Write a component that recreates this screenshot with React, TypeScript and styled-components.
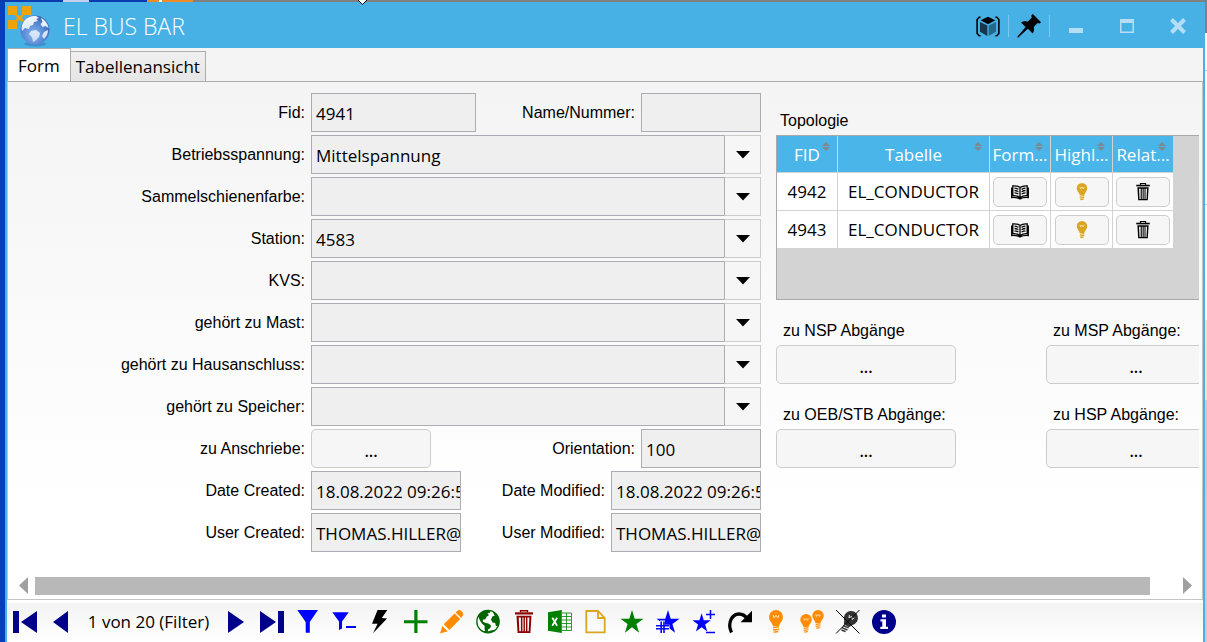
import React from 'react';
import styled, { createGlobalStyle } from 'styled-components';

const ui = '"Open Sans", "Noto Sans", sans-serif';
const arial = '"Liberation Sans", Arial, sans-serif';
const accent = '#47b1e6';

const Global = createGlobalStyle`
  *, *::before, *::after { box-sizing: border-box; }
  body { margin: 0; font-family: ${ui}; font-size: 17px; color: #000; }
  button, input, select { font: inherit; color: inherit; margin: 0; }
  svg { display: block; flex: none; }
`;

const Desktop = styled.div`
  position: relative;
  display: flex;
  min-height: 100vh;
  padding: 2px 2px 0 5px;
  background:
    linear-gradient(90deg, #0a3bb0 0 63px, #c4cfee 63px 89px, #0a3bb0 89px 147px, #f08a24 147px 159px, #fff 159px 162px, #f08a24 162px 193px, #808080 193px) 0 0 / 100% 2px no-repeat,
    linear-gradient(#808080 0 33px, #fff 33px 70px, #a9cfe8 70px 71px, #fff 71px 204px, #a9cfe8 204px 205px, #fff 205px 320px, #f6e3b0 320px 400px, #cfc8cc 400px) 100% 0 / 2px 100% no-repeat,
    #0540b8;
`;

const Cursor = styled.svg`
  position: absolute;
  left: 357px;
  top: 0;
`;

const Window = styled.div`
  flex: 1;
  min-width: 0;
  display: flex;
  flex-direction: column;
  border: solid ${accent};
  border-width: 0 2px;
  background: #fff;
`;

const TitleBar = styled.header`
  display: flex;
  align-items: center;
  height: 46px;
  padding-top: 2px;
  background: ${accent};
`;

const Title = styled.h1`
  flex: 1;
  margin: 0 0 0 12px;
  font-size: 23px;
  line-height: 32px;
  font-weight: 300;
  color: #fff;
`;

const Separator = styled.span`
  width: 1px;
  height: 22px;
  background: #7ec8ef;
`;

const IconButton = styled.button<{ $width: number }>`
  display: flex;
  align-items: center;
  justify-content: center;
  flex: none;
  width: ${p => p.$width}px;
  height: 36px;
  padding: 0;
  border: 0;
  background: none;
`;

const Tabs = styled.nav`
  display: flex;
  align-items: flex-end;
  height: 33px;
  background: #f4f4f4;
`;

const Tab = styled.button<{ $active?: boolean }>`
  height: ${p => (p.$active ? 33 : 30)}px;
  padding: ${p => (p.$active ? '2px 10px 0' : '0 5px')};
  border: 1px solid #acacac;
  border-bottom: 0;
  border-left-width: ${p => (p.$active ? 1 : 0)}px;
  background: ${p => (p.$active ? '#fff' : 'linear-gradient(#efefef, #e6e6e6)')};
  line-height: 24px;
`;

const Pane = styled.main`
  flex: 1;
  display: flex;
  flex-direction: column;
  border: 1px solid #c4c4c4;
  border-top-color: #acacac;
  background: linear-gradient(#f4f4f4, #fff 420px);
`;

const Form = styled.form`
  flex: 1;
  display: flex;
  gap: 15px;
  padding: 11px 3px 20px 0;
`;

const Fields = styled.div`
  flex: none;
  display: flex;
  flex-direction: column;
  gap: 3px;
`;

const Row = styled.div`
  display: grid;
  grid-template-columns: 297px 450px;
  column-gap: 6px;
  align-items: center;
`;

const Cell = styled.div`
  display: flex;
  align-items: center;
  gap: 6px;
`;

const Label = styled.label`
  flex: 1;
  font: 16px/20px ${arial};
  text-align: right;
  white-space: nowrap;
`;

const TextBox = styled.input<{ $width: number }>`
  flex: none;
  width: ${p => p.$width}px;
  height: 39px;
  padding: 2px 0 0 4px;
  border: 1px solid #abadb3;
  border-radius: 0;
  background: #efefef;
  outline: 0;
`;

const Combo = styled.div`
  flex: 1;
  display: grid;
  grid-template-columns: 1fr 37px;
`;

const Select = styled.select`
  grid-area: 1 / 1 / 2 / 3;
  height: 39px;
  padding: 2px 40px 0 4px;
  appearance: none;
  border: 1px solid #abadb3;
  border-radius: 0;
  background: #efefef;
`;

const Arrow = styled.span`
  grid-area: 1 / 2 / 2 / 3;
  z-index: 1;
  display: flex;
  align-items: center;
  justify-content: center;
  border: 1px solid #ccc;
  border-left-color: #abadb3;
  background: #f6f6f6;
  pointer-events: none;
`;

const MoreButton = styled.button<{ $width: number }>`
  flex: none;
  width: ${p => p.$width}px;
  height: 39px;
  padding: 4px 0 0;
  border: 1px solid #ccc;
  border-radius: 5px;
  background: #f6f6f6;
  font-weight: 600;
  font-size: 16px;
  line-height: 20px;
`;

const Side = styled.div`
  flex: 1;
  min-width: 0;
  overflow: hidden;
  padding-top: 12px;
`;

const SideLabel = styled.label`
  display: block;
  padding: 2px 0 0 7px;
  font: 16px/28px ${arial};
`;

const Caption = styled.h2`
  margin: 0;
  padding: 2px 0 0 4px;
  font: 16px/28px ${arial};
`;

const TableFrame = styled.div`
  height: 165px;
  border: 1px solid #a9a9a9;
  border-right: 0;
  background: #d3d3d3;
`;

const Table = styled.table`
  width: 397px;
  table-layout: fixed;
  border-collapse: separate;
  border-spacing: 0;
`;

const Th = styled.th<{ $width: number }>`
  position: relative;
  width: ${p => p.$width}px;
  height: 37px;
  padding: 2px 0 0;
  border: solid #d3d3d3;
  border-width: 0 1px 1px 0;
  background: #4ab5e8;
  color: #fff;
  font-weight: 400;
  line-height: 24px;
  white-space: nowrap;
`;

const Sort = styled.svg`
  position: absolute;
  top: 6px;
  right: 7px;
`;

const Td = styled.td`
  height: 38px;
  padding: 1px 0 0;
  border: solid #d3d3d3;
  border-width: 0 1px 1px 0;
  background: #fff;
  text-align: center;
  line-height: 24px;
`;

const CellButton = styled.button`
  display: flex;
  align-items: center;
  justify-content: center;
  width: 54px;
  height: 30px;
  margin: 0 auto;
  padding: 0;
  border: 1px solid #ccc;
  border-radius: 5px;
  background: #f6f6f6;
`;

const Links = styled.div`
  display: grid;
  grid-template-columns: 180px 180px;
  gap: 15px 90px;
  padding-top: 15px;
`;

const ScrollBar = styled.div`
  display: flex;
  align-items: center;
  gap: 6px;
  height: 26px;
  padding: 0 9px 0 11px;
`;

const Track = styled.div`
  flex: 1;
  height: 18px;
  padding-right: 27px;
`;

const Thumb = styled.div`
  height: 100%;
  background: #b8b8b8;
`;

const Toolbar = styled.footer`
  display: flex;
  align-items: center;
  height: 39px;
  margin-top: 3px;
  padding-bottom: 2px;
  background: linear-gradient(#f3f3f3, #fff);
`;

const Position = styled.span`
  width: 139px;
  text-align: center;
  line-height: 24px;
  white-space: nowrap;
`;

const BULB = (
  <>
    <circle cx="7" cy="7" r="7" />
    <path d="M1.500 10.500h11L10 16H4z" />
    <path d="M4 17.600l6-.8M4 20l6-.8M4.800 22.200l4.400-.7" stroke="currentColor" strokeWidth="1.500" />
    <path d="M4.200 5.200l.9 2.600L7 5.400l1.900 2.400.9-2.600" fill="none" stroke="#fff" strokeWidth=".8" />
  </>
);

const STAR = 'M12 0l2.700 8.700H23.500L16.400 14l2.700 8.700L12 17.300 4.900 22.700 7.600 14 .5 8.700h8.800z';

type IconProps = { color?: string; size?: number; children: React.ReactNode };
const Icon = ({ color = '#000', size = 24, children }: IconProps) => (
  <svg width={size} height={size} viewBox="0 0 24 24" fill="currentColor" color={color} overflow="visible" aria-hidden="true">
    {children}
  </svg>
);

const Trash = () => (
  <>
    <path d="M8.500 2.500V.7h7v1.800" fill="none" stroke="currentColor" strokeWidth="1.400" />
    <path d="M3 2.300h18v2.200H3z" />
    <path fillRule="evenodd" d="M4.500 5.800h15L18.400 23H5.600zM6.700 7.600l.7 13.600h1.500V7.600zM10.400 7.600v13.600h1.100V7.600zM12.900 7.600v13.600H14V7.600zM15.400 7.600v13.600h1.300l.7-13.600z" />
  </>
);

const LogoIcon = () => (
  <svg width="44" height="44" viewBox="0 0 44 44" aria-hidden="true">
    <defs>
      <radialGradient id="ocean" cx="45%" cy="65%" r="60%">
        <stop offset="0" stopColor="#8fb8ee" />
        <stop offset="0.6" stopColor="#5a8ad6" />
        <stop offset="1" stopColor="#3f6db8" />
      </radialGradient>
      <linearGradient id="land" x1="0" y1="0" x2="0" y2="1">
        <stop offset="0" stopColor="#f4f8ff" />
        <stop offset="1" stopColor="#c9dcf5" />
      </linearGradient>
    </defs>
    <g fill="#efa30b">
      <path d="M1 2h9v9H1zM15 2h9v9h-9zM1 16h9v9H1z" />
      <path d="M9 10l4 2 3-2 1 1-2 3 2 3-1 1-4-2-3 2-1-1 2-3-2-3z" />
    </g>
    <ellipse cx="28" cy="40" rx="11" ry="2.500" fill="#3f92c8" />
    <circle cx="28" cy="26" r="14.600" fill="url(#ocean)" />
    <path fill="url(#land)" d="M17 17c3-4 8-5.600 12-5l3 2-3 1 2 2-4 1-1 3-3 1-1 3-4-1-3 3c-1-4 0-7 2-10zM34 14c4 2 7 6 7.500 10l-3-2-3 1-2-3 2-2zM24 27l5-1 4 3-1 4-4 4-2 1-1-5-3-3zM37 28l4-2c0 4-2 7-4 9l-2-3z" />
  </svg>
);

const CubeIcon = () => (
  <svg width="24" height="21" viewBox="0 0 26 22" aria-hidden="true">
    <path d="M5 1H3.500L1.200 3.500v15L3.500 21H5M21 1h1.500l2.300 2.500v15L22.500 21H21" fill="none" stroke="#000" strokeWidth="1.700" />
    <path d="M13 .5L21 4.200 13 8.500 5 4.200z" />
    <path d="M4.300 6l8 4v11.300l-8-4.600z" fill="#14384a" />
    <path d="M21.700 6l-8 4v11.300l8-4.600z" fill="#24698a" />
  </svg>
);

const PinIcon = () => (
  <Icon>
    <path d="M15.800 0L24 8.300l-1.200 1.200-2.200-.4-3.900 4c.8 2.600.4 4.700-1 6.400l-4.900-4.700L1 23.700l-.8-.6L8.600 13 4 8.600c1.900-1.400 4.200-1.600 6.500-.8l4.200-4.100-.4-2.300z" />
  </Icon>
);

const tools: { name: string; color: string; art: React.ReactNode }[] = [
  { name: 'Filter', color: '#0000ff', art: <path d="M1.300 0H22l-8.200 12v10.700H9.700V12z" /> },
  { name: 'Filter entfernen', color: '#0000ff', art: <path d="M.3 2.300h16.400L10 11.500v7L7 20v-8.500zM14 16h10v2H14z" /> },
  { name: 'Aktion', color: '#000', art: <path d="M9.600 0h9.700l-5.500 8 5.300.4L5 23.300l4.600-9.600H4z" /> },
  { name: 'Neu', color: '#008000', art: <path d="M10.300 0h3.200v10.200H23.500v3H13.500V23h-3.200v-9.800H0v-3h10.300z" /> },
  {
    name: 'Bearbeiten', color: '#ff8c00',
    art: <path d="M2.300 16l5.400 5.300L0 23.500zM3.700 14.300L14.600 3.500l5.600 5.600L9.400 20zM15.700 2.400L17.400.8c1.400-1.300 3-.9 4.500.6s2 3.200.6 4.700L21.200 8z" />,
  },
  {
    name: 'Karte', color: '#006400',
    art: (
      <>
        <circle cx="12" cy="11.600" r="11.200" fill="#fff" stroke="currentColor" strokeWidth="1.300" />
        <path d="M2 5.500C4 2.300 7.500.4 11 .3l3.300 1.200-.7 1.800-2.200-.3 1.500 2.300-2.300 1.500-1.400 2.600-2.400.2.200 2.100 2.600 1.300 2.900.4 2.500 2.200-.6 2.300-2.300 1.700-.4 2-1.700 1.200-1.500-3.600.2-3.200-2.600-2.300-2.300-3.400zM17 1.500c3.300 1.600 5.700 4.600 6.200 8.500l-.2 3-1.500 3.500-1.700-.8-.6-2.700-2.700-.6-1.500-2.600 1.300-3.300 2.300-.7-1-2z" />
        <path d="M6 21c4 2.200 9 2 12.500-.3l-2-.8-4 1.300z" />
      </>
    ),
  },
  { name: 'Löschen', color: '#8b0000', art: <Trash /> },
  {
    name: 'Excel', color: '#008000',
    art: (
      <>
        <path d="M0 2.300L13.800 0v23L0 20.700z" />
        <path d="M4.300 7.800l4.800 8M9.100 7.800l-4.800 8" fill="none" stroke="#fff" strokeWidth="1.700" />
        <path d="M14 3h9.500v17.500H14M14 6.500h9M14 10h9M14 13.500h9M14 17h9M18.500 3v17" fill="none" stroke="currentColor" strokeWidth=".8" />
      </>
    ),
  },
  { name: 'Bericht', color: '#daa520', art: <path d="M2.300 1H14l6.700 7v14.300H2.300zM14 1v7h6.700" fill="none" stroke="currentColor" strokeWidth="1.800" /> },
  { name: 'Favorit', color: '#008000', art: <path d={STAR} /> },
  {
    name: 'Auswahl hinzufügen', color: '#0000ff',
    art: (
      <>
        <path d={STAR} />
        <path d="M6.500 10.500v13M0 17.200h13.500" stroke="#fff" strokeWidth="5" />
        <path d="M5.200 11.500V23M8 11.500V23M0 15.800h13M0 18.800h13" stroke="currentColor" strokeWidth="1.600" />
      </>
    ),
  },
  {
    name: 'Auswahl ändern', color: '#0000ff',
    art: (
      <>
        <path d={STAR} transform="translate(0 3.300) scale(.8)" />
        <path d="M18.500 0v9M14 4.500h9M14 22.500h9" stroke="currentColor" strokeWidth="1.500" />
      </>
    ),
  },
  {
    name: 'Wiederholen', color: '#000',
    art: (
      <>
        <path d="M3.500 22.500C-1 13 4 4 11 4c4 0 7 2.500 9 5.500" fill="none" stroke="currentColor" strokeWidth="3.300" />
        <path d="M24 .7v11.600H12.500z" />
      </>
    ),
  },
  { name: 'Hervorheben', color: '#ff8c00', art: <g transform="translate(5)">{BULB}</g> },
  {
    name: 'Alle hervorheben', color: '#ff8c00',
    art: (
      <>
        <g transform="translate(.3 4) scale(.82)">{BULB}</g>
        <g transform="translate(12.300) scale(.82)">{BULB}</g>
      </>
    ),
  },
  {
    name: 'Hervorhebung aufheben', color: '#333',
    art: (
      <>
        <g transform="rotate(30 12 12) translate(5.500 0)">{BULB}</g>
        <path d="M0 0l23.500 23.500M23.500 0L0 23.500" stroke="#000" strokeWidth="1" />
      </>
    ),
  },
  {
    name: 'Info', color: '#00008b',
    art: (
      <>
        <circle cx="12" cy="12" r="12" />
        <path d="M10 4.500h4v3h-4zM8.500 9.300H14v7.500h2v2.200H8.300v-2.200h2v-5.300H8.500z" fill="#fff" />
      </>
    ),
  },
];

const combos = [
  ['Betriebsspannung:', 'Mittelspannung'],
  ['Sammelschienenfarbe:', ''],
  ['Station:', '4583'],
  ['KVS:', ''],
  ['gehört zu Mast:', ''],
  ['gehört zu Hausanschluss:', ''],
  ['gehört zu Speicher:', ''],
];

const columns: [string, number][] = [['FID', 61], ['Tabelle', 152], ['Form...', 61], ['Highl...', 62], ['Relat...', 61]];
const links = ['zu NSP Abgänge', 'zu MSP Abgänge:', 'zu OEB/STB Abgänge:', 'zu HSP Abgänge:'];

const Pair = ({ items }: { items: [string, string, string, number][] }) => {
  const [a, b] = items;
  return (
    <Row>
      <Label htmlFor={a[0]}>{a[1]}</Label>
      <Cell>
        <TextBox id={a[0]} $width={a[3]} defaultValue={a[2]} />
        <Label htmlFor={b[0]}>{b[1]}</Label>
        <TextBox id={b[0]} $width={b[3]} defaultValue={b[2]} />
      </Cell>
    </Row>
  );
};

export default function App() {
  return (
    <>
      <Global />
      <Desktop>
        <Window>
          <TitleBar>
            <LogoIcon />
            <Title>EL BUS BAR</Title>
            <IconButton $width={40} aria-label="Objekt"><CubeIcon /></IconButton>
            <Separator />
            <IconButton $width={40} aria-label="Anheften"><PinIcon /></IconButton>
            <Separator />
            <IconButton $width={51} aria-label="Minimieren">
              <Icon color="#b5def5"><path d="M5 14h14v5H5z" /></Icon>
            </IconButton>
            <IconButton $width={51} aria-label="Maximieren">
              <Icon color="#b5def5"><path fillRule="evenodd" d="M5 5h14v14H5zM6.500 9v8.500h11V9z" /></Icon>
            </IconButton>
            <IconButton $width={51} aria-label="Schließen">
              <Icon color="#b5def5"><path d="M5.500 5.500l13 13M18.500 5.500l-13 13" stroke="currentColor" strokeWidth="4" /></Icon>
            </IconButton>
          </TitleBar>

          <Tabs>
            <Tab $active>Form</Tab>
            <Tab>Tabellenansicht</Tab>
          </Tabs>

          <Pane>
            <Form onSubmit={e => e.preventDefault()}>
              <Fields>
                <Pair items={[['fid', 'Fid:', '4941', 165], ['name', 'Name/Nummer:', '', 120]]} />
                {combos.map(([label, value]) => (
                  <Row key={label}>
                    <Label htmlFor={label}>{label}</Label>
                    <Combo>
                      <Select id={label} defaultValue={value}>
                        <option value={value}>{value}</option>
                      </Select>
                      <Arrow>
                        <svg width="14" height="8" viewBox="0 0 14 8" aria-hidden="true"><path d="M0 0h14L7 7.500z" /></svg>
                      </Arrow>
                    </Combo>
                  </Row>
                ))}
                <Row>
                  <Label htmlFor="anschriebe">zu Anschriebe:</Label>
                  <Cell>
                    <MoreButton type="button" id="anschriebe" $width={120}>...</MoreButton>
                    <Label htmlFor="orientation">Orientation:</Label>
                    <TextBox id="orientation" $width={120} defaultValue="100" />
                  </Cell>
                </Row>
                <Pair items={[['dc', 'Date Created:', '18.08.2022 09:26:5', 150], ['dm', 'Date Modified:', '18.08.2022 09:26:5', 150]]} />
                <Pair items={[['uc', 'User Created:', 'THOMAS.HILLER@', 150], ['um', 'User Modified:', 'THOMAS.HILLER@', 150]]} />
              </Fields>

              <Side>
                <Caption>Topologie</Caption>
                <TableFrame>
                  <Table>
                    <thead>
                      <tr>
                        {columns.map(([name, width]) => (
                          <Th key={name} $width={width}>
                            {name}
                            <Sort width="8" height="9" viewBox="0 0 8 9" fill="#7d8a92" aria-hidden="true">
                              <path d="M4 0l4 4H0zM4 9L0 5h8z" />
                            </Sort>
                          </Th>
                        ))}
                      </tr>
                    </thead>
                    <tbody>
                      {['4942', '4943'].map(fid => (
                        <tr key={fid}>
                          <Td>{fid}</Td>
                          <Td>EL_CONDUCTOR</Td>
                          <Td>
                            <CellButton type="button" aria-label="Formular">
                              <svg width="18" height="15" viewBox="0 0 18 15" aria-hidden="true">
                                <path d="M9 2.500C7 1 4.500.6 1.800.9v9.700c2.700-.3 5.200.6 7.200 2 2-1.400 4.500-2.300 7.200-2V.9C13.500.6 11 1 9 2.500zM9 2.500v10M.7 2.500v10c3-.2 6 .2 8.300 1.500 2.300-1.300 5.300-1.700 8.300-1.500v-10" fill="none" stroke="#000" strokeWidth="1.300" />
                                <path d="M3.500 3.200c1.500 0 2.700.5 3.900 1.200M3.500 5.500c1.500 0 2.700.5 3.900 1.200M3.500 7.800c1.500 0 2.700.5 3.900 1.200M14.500 3.200c-1.500 0-2.700.5-3.900 1.200M14.500 5.500c-1.500 0-2.700.5-3.900 1.200M14.500 7.800c-1.500 0-2.700.5-3.900 1.200" fill="none" stroke="#000" strokeWidth="1.300" />
                              </svg>
                            </CellButton>
                          </Td>
                          <Td>
                            <CellButton type="button" aria-label="Hervorheben">
                              <Icon color="#daa520" size={18}><g transform="translate(5)">{BULB}</g></Icon>
                            </CellButton>
                          </Td>
                          <Td>
                            <CellButton type="button" aria-label="Beziehung löschen">
                              <Icon size={18}><Trash /></Icon>
                            </CellButton>
                          </Td>
                        </tr>
                      ))}
                    </tbody>
                  </Table>
                </TableFrame>
                <Links>
                  {links.map(text => (
                    <div key={text}>
                      <SideLabel htmlFor={text}>{text}</SideLabel>
                      <MoreButton type="button" id={text} $width={180}>...</MoreButton>
                    </div>
                  ))}
                </Links>
              </Side>
            </Form>

            <ScrollBar>
              <svg width="10" height="18" viewBox="0 0 10 18" fill="#a0a0a0" aria-hidden="true"><path d="M9 0v17L0 8.500z" /></svg>
              <Track><Thumb /></Track>
              <svg width="10" height="18" viewBox="0 0 10 18" fill="#a0a0a0" aria-hidden="true"><path d="M0 0v17L9 8.500z" /></svg>
            </ScrollBar>
          </Pane>

          <Toolbar>
            <IconButton $width={36} aria-label="Erster"><Icon color="#00008b"><path d="M0 1h6v22H0zM24 1v22L8 12z" /></Icon></IconButton>
            <IconButton $width={36} aria-label="Zurück"><Icon color="#00008b"><path d="M19 1v22L4 12z" /></Icon></IconButton>
            <Position>1 von 20 (Filter)</Position>
            <IconButton $width={36} aria-label="Weiter"><Icon color="#00008b"><path d="M4 1v22l16-11z" /></Icon></IconButton>
            <IconButton $width={36} aria-label="Letzter"><Icon color="#00008b"><path d="M0 1v22l16-11zM18 1h6v22h-6z" /></Icon></IconButton>
            {tools.map(t => (
              <IconButton key={t.name} $width={36} aria-label={t.name} title={t.name}>
                <Icon color={t.color}>{t.art}</Icon>
              </IconButton>
            ))}
          </Toolbar>
        </Window>
        <Cursor width="11" height="5" viewBox="0 0 11 5" aria-hidden="true">
          <path d="M0-1l5.500 5.500L11-1z" fill="#fff" stroke="#000" />
        </Cursor>
      </Desktop>
    </>
  );
}
